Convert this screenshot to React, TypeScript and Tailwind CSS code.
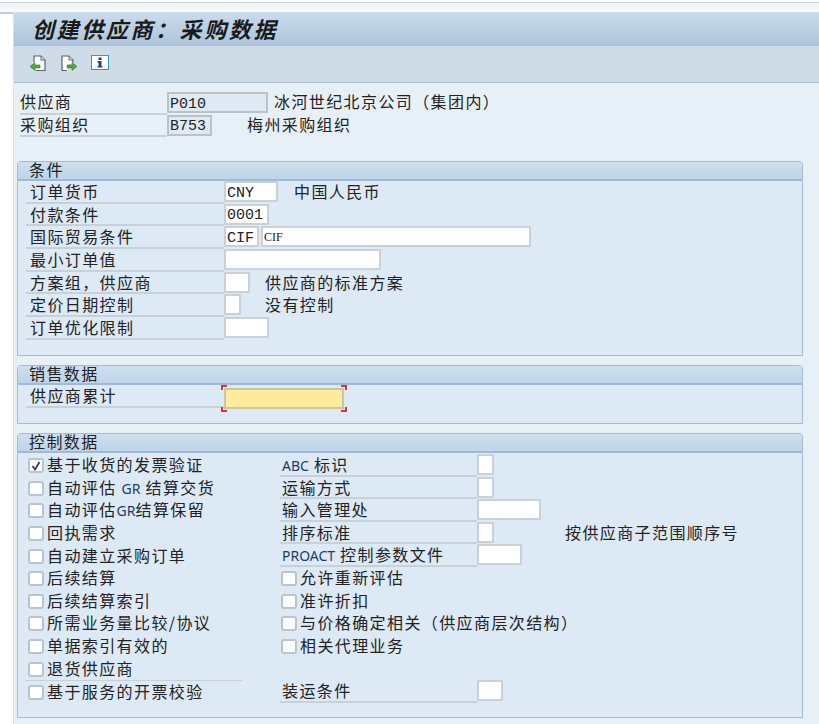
import React from "react";

const cjk = "font-['Noto_Sans_CJK_SC','Noto_Sans',sans-serif]";
const mono = "font-['Liberation_Mono','Noto_Sans_CJK_SC',monospace]";

function Field({ width, value, disabled, className = "" }: { width: string; value?: string; disabled?: boolean; className?: string }) {
  return (
    <div
      className={`${width} h-[21px] shrink-0 flex items-center pl-[1px] pt-[3px] border-2 rounded-[1px] ${mono} text-[15px] leading-none tracking-normal text-[#222] ${
        disabled ? "bg-[#dfeaf4] border-[#b9c2c9]" : "bg-white border-[#c9d0d6]"
      } ${className}`}
    >
      {value}
    </div>
  );
}

function LabelRow({ label, children, desc, descClass = "" }: { label: React.ReactNode; children: React.ReactNode; desc?: string; descClass?: string }) {
  return (
    <div className="flex h-[22.7px] items-start">
      <div className="w-[198px] ml-[8px] pl-[4px] h-full border-b-2 border-[#c9d1d8] leading-[20px] whitespace-nowrap">{label}</div>
      <div className="flex gap-[2px] items-start">{children}</div>
      {desc && <div className={`leading-[20px] whitespace-nowrap ${descClass}`}>{desc}</div>}
    </div>
  );
}

function Panel({ title, bodyHeight, children }: { title: string; bodyHeight: string; children: React.ReactNode }) {
  return (
    <section className="ml-[3px] w-[786px] border border-[#a3bcd6] rounded-t-[4px] bg-[#dde9f4]">
      <div className="h-[19px] bg-gradient-to-b from-[#cfdfee] to-[#bed4e9] border-b-2 border-[#a0b9d4] rounded-t-[3px] pl-[11px] leading-[14px] text-[#222]">
        {title}
      </div>
      <div className={bodyHeight}>{children}</div>
    </section>
  );
}

function Check({ label, checked }: { label: React.ReactNode; checked?: boolean }) {
  return (
    <div className="flex items-center h-[22.6px] whitespace-nowrap">
      <div className="w-[16px] h-[15px] shrink-0 mt-[1px] mr-[3px] bg-white border-2 border-[#bcc3ca] rounded-[3px] flex items-center justify-center">
        {checked && (
          <svg width="10" height="10" viewBox="0 0 10 10" fill="none">
            <path d="M1.5 5 L4 8.5 L8.5 1" stroke="#3b3a5c" strokeWidth="1.8" />
          </svg>
        )}
      </div>
      <span className="mb-[2px]">{label}</span>
    </div>
  );
}

function Latin({ children }: { children: string }) {
  return <span className="font-['Noto_Sans',sans-serif] text-[14px] tracking-normal text-[#1d3b66]">{children}</span>;
}

function DocBack() {
  return (
    <svg width="18" height="17" viewBox="0 0 18 17" fill="none">
      <path d="M5 7 V1 H12 L16 5 V15.5 H7" fill="#fff" stroke="#5a6268" strokeWidth="1.2" />
      <path d="M12 1 V5 H16" fill="#dfe5ea" stroke="#5a6268" strokeWidth="1" />
      <path d="M1 11.5 L6 7.5 V10 H11 V13 H6 V15.5 Z" fill="#56a63a" stroke="#3c7f27" strokeWidth="0.6" />
    </svg>
  );
}

function DocForward() {
  return (
    <svg width="18" height="17" viewBox="0 0 18 17" fill="none">
      <path d="M2 1 H9 L13 5 V9 H8 V15.5 H2 Z" fill="#fff" />
      <path d="M2 15.5 V1 H9 L13 5 V7.5 M2 15.5 H7" stroke="#5a6268" strokeWidth="1.2" />
      <path d="M9 1 V5 H13" fill="#dfe5ea" stroke="#5a6268" strokeWidth="1" />
      <path d="M17 11.5 L12 7.5 V10 H7 V13 H12 V15.5 Z" fill="#56a63a" stroke="#3c7f27" strokeWidth="0.6" />
    </svg>
  );
}

function InfoIcon() {
  return (
    <svg width="18" height="15" viewBox="0 0 18 15" fill="none">
      <rect x="0.5" y="0.5" width="17" height="14" fill="#fff" stroke="#2c9ad6" />
      <rect x="7.5" y="2.5" width="3" height="2.5" fill="#12459b" />
      <path d="M6.5 6 H10.5 V11 H11.5 V12.5 H6.5 V11 H7.5 V7.5 H6.5 Z" fill="#12459b" />
    </svg>
  );
}

function RightRow({ label, width, desc }: { label: React.ReactNode; width: string; desc?: string }) {
  return (
    <div className="flex items-start h-[22.6px]">
      <div className="w-[197px] h-full pl-[2px] border-b-2 border-[#c9d1d8] leading-[21px] whitespace-nowrap">{label}</div>
      <Field width={width} />
      {desc && <div className="ml-[71px] leading-[20px] whitespace-nowrap">{desc}</div>}
    </div>
  );
}

export default function App() {
  return (
    <div className={`w-[819px] h-[724px] overflow-hidden bg-white ${cjk} text-[16px] tracking-[1.4px] text-[#222]`}>
      <div className="h-[12px] mt-[2px] -mb-[2px] border-t border-[#cdd5df] border-b-2 border-b-[#c2ccd9] bg-gradient-to-b from-[#f0f3f8] to-[#f8fafc]" />
      <main className="ml-[13px] h-[712px] bg-[#e8f0f7] border-l border-[#d6dfe8]">
        <header className="h-[34px] bg-gradient-to-b from-[#cbdcec] to-[#adc4dc] border-b border-[#a9bfd5] pl-[18px] text-[22px] leading-[32px] tracking-[2.6px] italic font-bold text-[#1a1a1a]">
          创建供应商：采购数据
        </header>
        <div className="h-[37px] bg-[#cfdce7] border-b border-[#a9bccd] flex gap-[13px] pl-[15px] pt-[9px] items-start">
          <DocBack />
          <DocForward />
          <InfoIcon />
        </div>

        <div className="pt-[9px] h-[78px]">
          <div className="flex items-start h-[22.5px]">
            <div className="w-[147px] ml-[6px] h-full border-b-2 border-[#c9d1d8] leading-[18px]">供应商</div>
            <Field width="w-[101px]" value="P010" disabled />
            <div className="ml-[6px] leading-[18px] whitespace-nowrap">冰河世纪北京公司（集团内）</div>
          </div>
          <div className="flex items-start h-[22.5px]">
            <div className="w-[147px] ml-[6px] h-full border-b-2 border-[#c9d1d8] leading-[18px]">采购组织</div>
            <Field width="w-[45px]" value="B753" disabled />
            <div className="ml-[35px] leading-[19px] whitespace-nowrap">梅州采购组织</div>
          </div>
        </div>

        <Panel title="条件" bodyHeight="h-[174px]">
          <LabelRow label="订单货币" desc="中国人民币" descClass="ml-[16px]">
            <Field width="w-[54px]" value="CNY" />
          </LabelRow>
          <LabelRow label="付款条件">
            <Field width="w-[45px]" value="0001" />
          </LabelRow>
          <LabelRow label="国际贸易条件">
            <Field width="w-[35px]" value="CIF" />
            <Field width="w-[270px]" value="CIF" className="!font-['Liberation_Serif',serif] !text-[12px] !pt-[1px]" />
          </LabelRow>
          <LabelRow label="最小订单值">
            <Field width="w-[157px]" />
          </LabelRow>
          <LabelRow label="方案组，供应商" desc="供应商的标准方案" descClass="ml-[15px]">
            <Field width="w-[26px]" />
          </LabelRow>
          <LabelRow label="定价日期控制" desc="没有控制" descClass="ml-[24px]">
            <Field width="w-[17px]" />
          </LabelRow>
          <LabelRow label="订单优化限制">
            <Field width="w-[45px]" />
          </LabelRow>
        </Panel>

        <div className="h-[9px]" />

        <Panel title="销售数据" bodyHeight="h-[38px]">
          <LabelRow label="供应商累计">
            <div className="relative mt-[3px]">
              <Field width="w-[120px]" className="!bg-[#ffeb9c] !border-[#c9c7a0]" />
              <span className="absolute -left-[3px] -top-[3px] w-[6px] h-[5px] border-l-2 border-t-2 border-[#d8343a]" />
              <span className="absolute -right-[3px] -top-[3px] w-[6px] h-[5px] border-r-2 border-t-2 border-[#d8343a]" />
              <span className="absolute -left-[3px] -bottom-[3px] w-[6px] h-[5px] border-l-2 border-b-2 border-[#d8343a]" />
              <span className="absolute -right-[3px] -bottom-[3px] w-[6px] h-[5px] border-r-2 border-b-2 border-[#d8343a]" />
            </div>
          </LabelRow>
        </Panel>

        <div className="h-[9px]" />

        <Panel title="控制数据" bodyHeight="h-[264px] pt-[1px]">
          <div className="flex">
            <div className="w-[262px] shrink-0 pl-[10px]">
              <Check checked label="基于收货的发票验证" />
              <Check label={<>自动评估 <Latin>GR</Latin> 结算交货</>} />
              <Check label={<>自动评估<Latin>GR</Latin>结算保留</>} />
              <Check label="回执需求" />
              <Check label="自动建立采购订单" />
              <Check label="后续结算" />
              <Check label="后续结算索引" />
              <Check label="所需业务量比较/协议" />
              <Check label="单据索引有效的" />
              <div className="w-[217px] -ml-[3px] pl-[3px] border-b border-[#c9d1d8]">
                <Check label="退货供应商" />
              </div>
              <Check label="基于服务的开票校验" />
            </div>
            <div className="flex-1">
              <RightRow label={<><Latin>ABC</Latin> 标识</>} width="w-[17px]" />
              <RightRow label="运输方式" width="w-[17px]" />
              <RightRow label="输入管理处" width="w-[64px]" />
              <RightRow label="排序标准" width="w-[17px]" desc="按供应商子范围顺序号" />
              <RightRow label={<><Latin>PROACT</Latin> 控制参数文件</>} width="w-[45px]" />
              <div className="pl-[1px]">
                <Check label="允许重新评估" />
                <Check label="准许折扣" />
                <Check label="与价格确定相关（供应商层次结构）" />
                <Check label="相关代理业务" />
              </div>
              <div className="h-[22.6px]" />
              <RightRow label="装运条件" width="w-[26px]" />
            </div>
          </div>
        </Panel>
      </main>
    </div>
  );
}
